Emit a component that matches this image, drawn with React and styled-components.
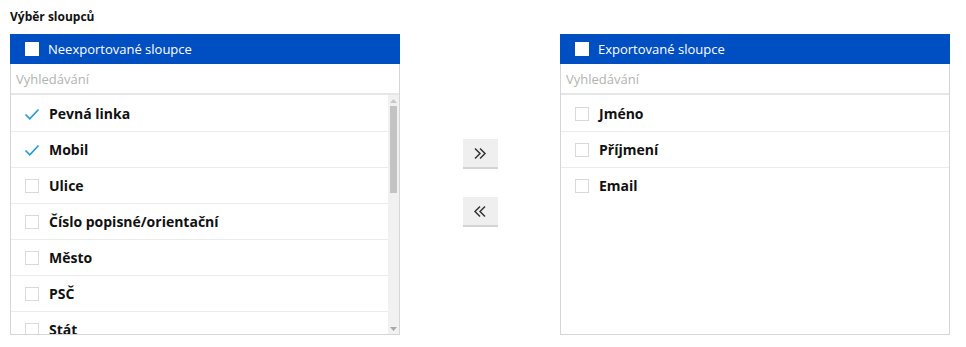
import React, { useState } from 'react';
import styled, { createGlobalStyle } from 'styled-components';

const GlobalStyle = createGlobalStyle`
  html, body {
    margin: 0;
    padding: 0;
    background: #ffffff;
    font-family: 'Open Sans', 'Noto Sans', sans-serif;
    color: #111111;
  }
`;

const notExported = [
  { name: 'Pevná linka', checked: true },
  { name: 'Mobil', checked: true },
  { name: 'Ulice' },
  { name: 'Číslo popisné/orientační' },
  { name: 'Město' },
  { name: 'PSČ' },
  { name: 'Stát' },
  { name: 'Titul' },
  { name: 'Datum narození' },
  { name: 'Pohlaví' },
];

const exported = [{ name: 'Jméno' }, { name: 'Příjmení' }, { name: 'Email' }];

function CheckMark() {
  return (
    <svg width="16" height="14" viewBox="0 0 16 14">
      <path d="M1.5 7.5 L5.8 11.8 L14.5 2.5" fill="none" stroke="#1e9ad6" strokeWidth="1.6" />
    </svg>
  );
}

function Chevrons({ dir }) {
  const d =
    dir === 'right'
      ? 'M2 1.5 L7 6.5 L2 11.5 M7 1.5 L12 6.5 L7 11.5'
      : 'M12 1.5 L7 6.5 L12 11.5 M7 1.5 L2 6.5 L7 11.5';
  return (
    <svg width="14" height="13" viewBox="0 0 14 13">
      <path d={d} fill="none" stroke="#333333" strokeWidth="1.5" />
    </svg>
  );
}

function Scrollbar() {
  return (
    <Track>
      <Arrow>
        <svg width="7" height="4" viewBox="0 0 7 4">
          <path d="M0 4 L3.5 0 L7 4 Z" fill="#c8c8c8" />
        </svg>
      </Arrow>
      <TrackBody>
        <Thumb />
      </TrackBody>
      <Arrow>
        <svg width="7" height="4" viewBox="0 0 7 4">
          <path d="M0 0 L3.5 4 L7 0 Z" fill="#a8a8a8" />
        </svg>
      </Arrow>
    </Track>
  );
}

function ColumnList({ title, items, scroll }) {
  return (
    <Panel>
      <Header>
        <HeaderBox />
        <HeaderText>{title}</HeaderText>
      </Header>
      <Search placeholder="Vyhledávání" />
      <Body>
        <List>
          {items.map((item) => (
            <Row key={item.name}>
              <Tick>{item.checked ? <CheckMark /> : <Box />}</Tick>
              <Label>{item.name}</Label>
            </Row>
          ))}
        </List>
        {scroll && <Scrollbar />}
      </Body>
    </Panel>
  );
}

export default function App() {
  const [left] = useState(notExported);
  const [right] = useState(exported);

  return (
    <>
      <GlobalStyle />
      <Page>
        <Title>Výběr sloupců</Title>
        <Columns>
          <ColumnList title="Neexportované sloupce" items={left} scroll />
          <Middle>
            <MoveButton>
              <Chevrons dir="right" />
            </MoveButton>
            <MoveButton>
              <Chevrons dir="left" />
            </MoveButton>
          </Middle>
          <ColumnList title="Exportované sloupce" items={right} />
        </Columns>
      </Page>
    </>
  );
}

const Page = styled.div`
  padding: 9px 10px 0 10px;
`;

const Title = styled.div`
  font-size: 12px;
  font-weight: bold;
  line-height: 16px;
  height: 25px;
`;

const Columns = styled.div`
  display: flex;
  align-items: flex-start;
`;

const Panel = styled.div`
  width: 390px;
  height: 301px;
  box-sizing: border-box;
  border: 1px solid #d6d6d6;
  border-top: none;
  display: flex;
  flex-direction: column;
`;

const Header = styled.div`
  height: 30px;
  margin: 0 -1px;
  background: #004fc2;
  display: flex;
  align-items: center;
  padding-left: 15px;
`;

const HeaderBox = styled.span`
  width: 14px;
  height: 14px;
  background: #ffffff;
  margin-right: 9px;
`;

const HeaderText = styled.span`
  color: #ffffff;
  font-size: 13px;
`;

const Search = styled.input`
  height: 29px;
  border: none;
  border-bottom: 2px solid #e6e6e6;
  padding: 0 5px;
  font-family: inherit;
  font-size: 13px;
  outline: none;
  &::placeholder {
    color: #b3b3b3;
  }
`;

const Body = styled.div`
  flex: 1;
  min-height: 0;
  display: flex;
`;

const List = styled.div`
  flex: 1;
  overflow: hidden;
  padding-top: 1px;
`;

const Track = styled.div`
  width: 11px;
  background: #f1f1f1;
  display: flex;
  flex-direction: column;
`;

const Arrow = styled.div`
  height: 11px;
  display: flex;
  align-items: center;
  justify-content: center;
`;

const TrackBody = styled.div`
  flex: 1;
  padding: 0 2px;
`;

const Thumb = styled.div`
  height: 87px;
  background: #c3c3c3;
`;

const Row = styled.div`
  height: 35px;
  border-bottom: 1px solid #ebebeb;
  display: flex;
  align-items: center;
  padding-left: 13px;
  &:last-child {
    border-bottom-color: transparent;
  }
`;

const Tick = styled.span`
  width: 16px;
  height: 16px;
  display: flex;
  align-items: center;
  justify-content: center;
  margin-right: 9px;
`;

const Box = styled.span`
  width: 12px;
  height: 12px;
  border: 1px solid #d9d9d9;
`;

const Label = styled.span`
  font-size: 14px;
  font-weight: bold;
`;

const Middle = styled.div`
  width: 160px;
  display: flex;
  flex-direction: column;
  align-items: center;
  padding-top: 105px;
  gap: 28px;
`;

const MoveButton = styled.button`
  width: 35px;
  height: 30px;
  border: none;
  border-bottom: 2px solid #d4d4d4;
  background: #efefef;
  display: flex;
  align-items: center;
  justify-content: center;
  padding: 0;
  cursor: pointer;
`;
